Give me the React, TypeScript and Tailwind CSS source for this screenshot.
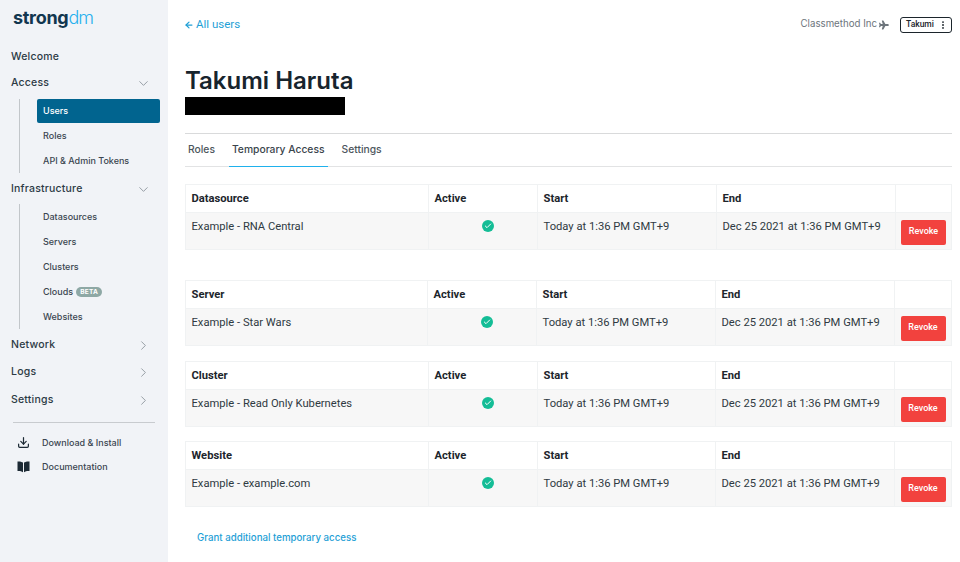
import { ArrowLeft, Check, ChevronDown, ChevronRight, Download, EllipsisVertical } from "lucide-react";
import { FaPlane } from "react-icons/fa";

const side = "font-['Inter',sans-serif]";

function NavHead({ label, open, className }: { label: string; open?: boolean; className?: string }) {
  const Icon = open ? ChevronDown : ChevronRight;
  return (
    <div className={`flex items-center justify-between pl-[11px] pr-[17px] text-[10.5px] font-medium tracking-[0.2px] text-[#2c3a45] ${className ?? ""}`}>
      <span>{label}</span>
      <Icon size={15} strokeWidth={1.25} className="text-[#7d868e]" />
    </div>
  );
}

function SubNav({ children, className }: { children: React.ReactNode; className?: string }) {
  return <div className={`ml-[19px] flex flex-col border-l border-[#c2c6ca] pl-[17px] pr-2 ${className ?? ""}`}>{children}</div>;
}

function SubItem({ label, active, beta }: { label: string; active?: boolean; beta?: boolean }) {
  return (
    <div
      className={`flex items-center gap-[3px] rounded-[2px] px-[6px] text-[9px] font-medium ${
        active ? "h-[24px] bg-[#01648f] text-white" : "h-[25px] text-[#3b4650]"
      }`}
    >
      {label}
      {beta && <span className="rounded-full bg-[#8ea8a5] px-[4px] text-[6.5px] leading-[10px] font-bold tracking-[0.3px] text-white">BETA</span>}
    </div>
  );
}

function BookIcon() {
  return (
    <svg width="13" height="13" viewBox="0 0 13 13" className="text-[#1d2a35]" fill="currentColor">
      <path d="M0.5 1.5 C2.5 1.3 4.5 1.6 6 2.6 V12.2 C4.5 11.2 2.5 10.9 0.5 11.1 Z" />
      <path d="M12.5 1.5 C10.5 1.3 8.5 1.6 7 2.6 V12.2 C8.5 11.2 10.5 10.9 12.5 11.1 Z" />
    </svg>
  );
}

function Sidebar() {
  return (
    <aside className={`flex w-[168px] shrink-0 flex-col bg-[#f1f3f7] ${side}`}>
      <div className="mt-[6px] pl-[13px] text-[18px] leading-[24px] tracking-[-0.3px]">
        <span className="font-bold text-[#12364f]">strong</span>
        <span className="font-light tracking-[-1px] text-[#27b0ee]">dm</span>
      </div>
      <div className="mt-[20px] pl-[11px] text-[10.5px] leading-[14px] font-medium tracking-[0.2px] text-[#2c3a45]">Welcome</div>
      <NavHead label="Access" open className="mt-[12px] h-[14px]" />
      <SubNav className="mt-[9px]">
        <SubItem label="Users" active />
        <SubItem label="Roles" />
        <SubItem label="API & Admin Tokens" />
      </SubNav>
      <NavHead label="Infrastructure" open className="mt-[8px] h-[16px]" />
      <SubNav className="mt-[7px]">
        <SubItem label="Datasources" />
        <SubItem label="Servers" />
        <SubItem label="Clusters" />
        <SubItem label="Clouds" beta />
        <SubItem label="Websites" />
      </SubNav>
      <NavHead label="Network" className="mt-[8px] h-[16px]" />
      <NavHead label="Logs" className="mt-[11px] h-[16px]" />
      <NavHead label="Settings" className="mt-[12px] h-[16px]" />
      <div className="mx-[13px] mt-[14px] border-t border-[#c8cbcf]" />
      <div className="mt-[13px] flex items-center gap-[12px] pl-[17px] text-[9px] font-medium text-[#3b4650]">
        <Download size={13} strokeWidth={2.25} className="text-[#1d2a35]" />
        Download & Install
      </div>
      <div className="mt-[10px] flex items-center gap-[12px] pl-[17px] text-[9px] font-medium text-[#3b4650]">
        <BookIcon />
        Documentation
      </div>
    </aside>
  );
}

type Row = { kind: string; name: string; cols: string[]; };

const rows: Row[] = [
  { kind: "Datasource", name: "Example - RNA Central", cols: ["w-[243px]", "w-[109px]", "w-[179px]", "w-[179px]"] },
  { kind: "Server", name: "Example - Star Wars", cols: ["w-[242px]", "w-[109px]", "w-[179px]", "w-[179px]"] },
  { kind: "Cluster", name: "Example - Read Only Kubernetes", cols: ["w-[243px]", "w-[109px]", "w-[178px]", "w-[179px]"] },
  { kind: "Website", name: "Example - example.com", cols: ["w-[243px]", "w-[109px]", "w-[178px]", "w-[179px]"] },
];

function AccessTable({ row, className }: { row: Row; className?: string }) {
  const th = "h-[28px] border border-[#f0f2f3] px-[5.5px] pt-[1px] text-left align-middle text-[11.2px] font-bold text-[#1c252c]";
  const td = "h-[37px] border border-[#f0f2f3] px-[5.5px] pt-[6px] align-top text-[11.2px] text-[#2f3a42]";
  return (
    <table className={`w-full table-fixed border-collapse bg-white ${className ?? ""}`}>
      <colgroup>
        {row.cols.map((c, i) => <col key={i} className={c} />)}
        <col />
      </colgroup>
      <thead>
        <tr>
          <th className={th}>{row.kind}</th>
          <th className={th}>Active</th>
          <th className={th}>Start</th>
          <th className={th}>End</th>
          <th className={th} />
        </tr>
      </thead>
      <tbody className="bg-[#f7f7f7]">
        <tr>
          <td className={td}>{row.name}</td>
          <td className={td}>
            <div className="flex justify-center pl-[9px] pt-[1px]">
              <span className="flex size-[12px] items-center justify-center rounded-full bg-[#14bd96]">
                <Check size={8} strokeWidth={3} className="text-white" />
              </span>
            </div>
          </td>
          <td className={td}>Today at 1:36 PM GMT+9</td>
          <td className={td}>Dec 25 2021 at 1:36 PM GMT+9</td>
          <td className="h-[37px] border border-[#f0f2f3] text-center align-middle">
            <button className="h-[25px] w-[45px] rounded-[2px] bg-[#f2423e] text-[9px] font-medium text-white">Revoke</button>
          </td>
        </tr>
      </tbody>
    </table>
  );
}

export default function App() {
  return (
    <div className="flex h-[562px] w-[960px] overflow-hidden bg-white font-['Roboto',sans-serif]">
      <Sidebar />
      <main className="flex flex-1 flex-col pl-[17px] pr-[8px]">
        <div className="mt-[16px] flex h-[17px] items-center justify-between">
          <div className="mt-[1px] -ml-[1px] flex items-center gap-[2px] text-[11.5px] text-[#1f9fd6]">
            <ArrowLeft size={10} strokeWidth={3} />
            All users
          </div>
          <div className="flex items-center">
            <span className={`text-[9.7px] text-[#6d757c] ${side}`}>Classmethod Inc</span>
            <FaPlane size={10} className="ml-[2px] text-[#6d757c]" />
            <div className="ml-[11px] flex h-[16px] w-[52px] items-center justify-between rounded-[3px] border border-[#1c252c] pl-[5px] pr-[3px] text-[8.5px] font-medium text-[#1c252c]">
              Takumi
              <EllipsisVertical size={10} strokeWidth={2.5} />
            </div>
          </div>
        </div>
        <h1 className={`mt-[33px] text-[24px] leading-[30px] font-semibold text-[#17242d] ${side}`}>Takumi Haruta</h1>
        <div className="mt-[1px] h-[18px] w-[160px] bg-black" />
        <div className={`mt-[18px] flex h-[34px] items-stretch border-y border-[#d9dadb] border-b-[#e2e3e4] text-[10.3px] font-medium text-[#4d565d] ${side}`}>
          <div className="flex items-center px-[3px]">Roles</div>
          <div className="-mb-px ml-[11px] flex items-center border-b border-b-[#1fb1ec] px-[3px] text-[#3a444c]">Temporary Access</div>
          <div className="ml-[11px] flex items-center px-[3px]">Settings</div>
        </div>
        <AccessTable row={rows[0]} className="mt-[17px]" />
        <AccessTable row={rows[1]} className="mt-[30px]" />
        <AccessTable row={rows[2]} className="mt-[15px]" />
        <AccessTable row={rows[3]} className="mt-[14px]" />
        <div className={`mt-[24px] pl-[12px] text-[9.7px] font-medium text-[#1f9fd6] ${side}`}>Grant additional temporary access</div>
      </main>
    </div>
  );
}
